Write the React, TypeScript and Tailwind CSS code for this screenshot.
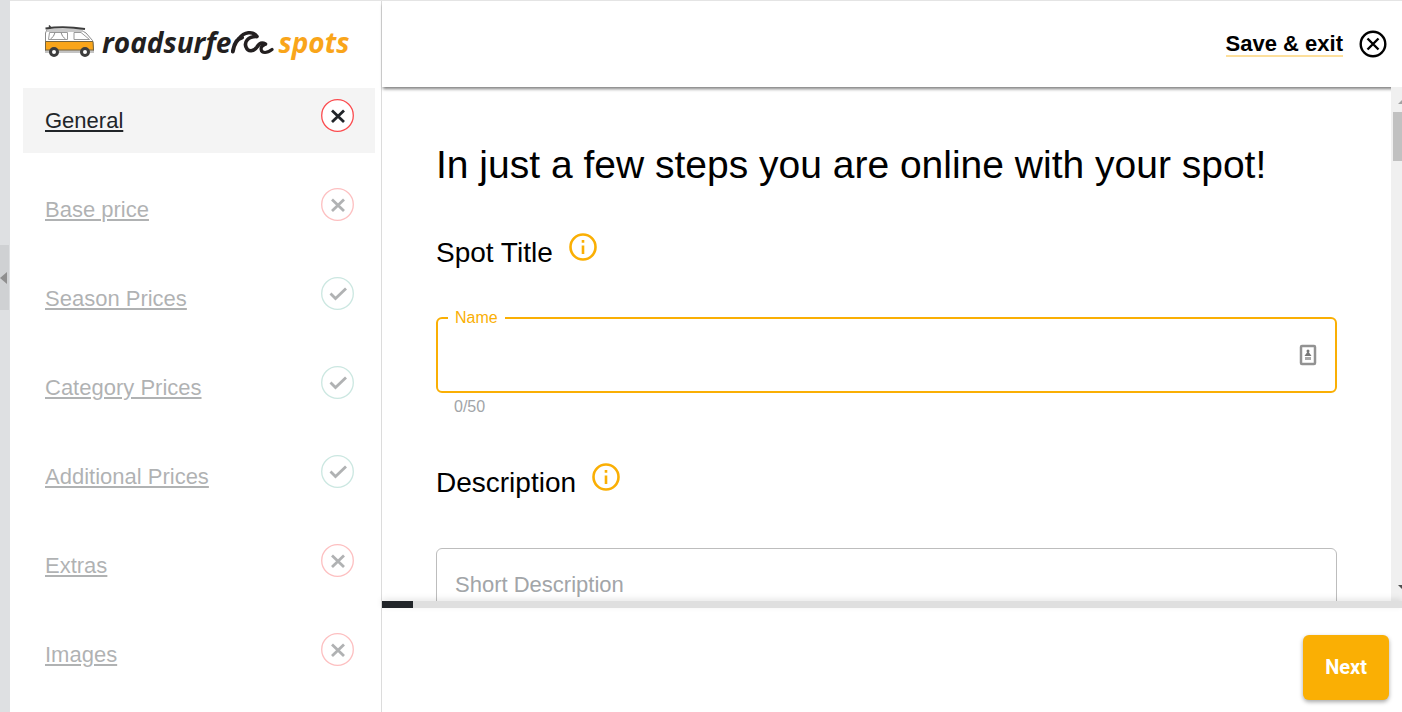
import { useState } from 'react';

type Step = {
  name: string;
  done: boolean;
};

const steps: Step[] = [
  { name: 'General', done: false },
  { name: 'Base price', done: false },
  { name: 'Season Prices', done: true },
  { name: 'Category Prices', done: true },
  { name: 'Additional Prices', done: true },
  { name: 'Extras', done: false },
  { name: 'Images', done: false },
];

const VanIcon = () => (
  <svg width="52" height="34" viewBox="0 0 52 34" fill="none" aria-hidden="true">
    <path d="M3 5.500 H36 L42 9 L48.500 16.500 L49.500 27 H1.500 V9 Z" fill="#fff" stroke="#8a8a8a" />
    <path d="M3 5 H37 L40 8 H2.500 Z" fill="#c9c9c9" />
    <path d="M1.500 17.500 H49 L49.500 26 H1.500 Z" fill="#f9a51a" stroke="#77653f" />
    <path d="M5.500 8.500 H23.500 V15.500 H4.500 Z M30 8.500 H37 L45.500 15.500 H30 Z" fill="#fff" stroke="#9a9a9a" />
    <path d="M11 8.500 Q10 13 6.500 15 M17 8.500 Q18 13 21.500 15" stroke="#8a8a8a" />
    <path d="M1 28 H50" stroke="#c4c4c4" strokeWidth="2" />
    <path d="M1.500 4.500 Q20 2 41 5" stroke="#3d3d3d" strokeWidth="2" />
    <path d="M5 1.500 L7 4" stroke="#3d3d3d" strokeWidth="1.500" />
    <circle cx="10" cy="28" r="3.500" fill="#fff" stroke="#3d3d3d" strokeWidth="3" />
    <circle cx="41" cy="28" r="3.500" fill="#fff" stroke="#3d3d3d" strokeWidth="3" />
  </svg>
);

const WaveIcon = () => (
  <svg width="43" height="28" viewBox="0 0 43 28" fill="none" stroke="#231f20" strokeLinecap="round" strokeLinejoin="round" aria-hidden="true">
    <path d="M1.800 22.500 C3 15 5 10 11 8.500" strokeWidth="4" />
    <path d="M8 9.500 C13 3 22 1.500 26 7.500" strokeWidth="3.600" />
    <path d="M25 7.500 C17 7.500 13 13 15 18 C17 23.500 23 22.500 26 18 C28 14.500 31 13 34.500 15" strokeWidth="3.600" />
    <path d="M33 16 C28.500 18 29.500 23.500 34 23.500 C37 23.500 39 22 41 20.500" strokeWidth="3.200" />
  </svg>
);

const Logo = () => (
  <a href="#" aria-label="roadsurfer spots" className="flex h-[87px] items-start pl-[34px] pt-[23px]">
    <VanIcon />
    <span className="ml-[6px] font-['Open_Sans',sans-serif] text-[28px] font-bold italic leading-9 text-[#231f20]">
      roadsurfe
    </span>
    <span className="pt-[5px]">
      <WaveIcon />
    </span>
    <span className="ml-1 font-['Open_Sans',sans-serif] text-[28px] font-bold italic leading-9 text-[#f9a51a]">
      spots
    </span>
  </a>
);

const StatusIcon = ({ done }: { done: boolean }) => (
  <svg width="33" height="33" viewBox="0 0 33 33" fill="none" aria-hidden="true">
    <circle cx="16.500" cy="16.500" r="15.800" fill="#fff" stroke={done ? '#6cbcaa' : '#fb4b4e'} strokeWidth="1.300" />
    {done ? (
      <path d="M9.500 16.500 L14.500 21.500 L25 11.500" stroke="#212529" strokeWidth="2.800" />
    ) : (
      <path d="M11 11.500 L23 23 M23 11.500 L11 23" stroke="#212529" strokeWidth="2.800" />
    )}
  </svg>
);

const InfoButton = ({ label }: { label: string }) => (
  <button type="button" aria-label={label}>
    <svg width="28" height="28" viewBox="0 0 28 28" fill="none" aria-hidden="true">
      <circle cx="14" cy="14" r="12.500" stroke="#faaf04" strokeWidth="2.600" />
      <path d="M14 7 V9.800 M14 12.500 V21" stroke="#faaf04" strokeWidth="2.600" />
    </svg>
  </button>
);

const ContactIcon = () => (
  <svg width="18" height="22" viewBox="0 0 18 22" fill="none" aria-hidden="true">
    <rect x="2" y="2" width="14" height="18" rx="1" fill="#fff" stroke="#929292" strokeWidth="2.500" />
    <circle cx="9" cy="7" r="1.500" fill="#777" />
    <path d="M5.500 12 L9 7 L12.500 12 Z" fill="#777" />
    <path d="M6 14.500 H12" stroke="#aaa" strokeWidth="3" />
  </svg>
);

const Sidebar = () => (
  <aside className="flex w-[372px] shrink-0 flex-col border-r border-[#dcdcdc]">
    <Logo />
    <nav className="flex flex-col gap-6 pl-[13px] pr-[6px]">
      {steps.map((step, index) => (
        <a
          key={step.name}
          href="#"
          className={
            index === 0
              ? 'flex h-[65px] items-start justify-between bg-[#f4f4f4] pl-[22px] pr-[21px] pt-[11px] text-[22px]'
              : 'flex h-[65px] items-start justify-between pl-[22px] pr-[21px] pt-[11px] text-[22px] opacity-35'
          }
        >
          <span className="pt-[6px] leading-8 text-[#212529] underline decoration-2 underline-offset-2">{step.name}</span>
          <StatusIcon done={step.done} />
        </a>
      ))}
    </nav>
  </aside>
);

const ScrollBar = () => (
  <div className="relative z-20 flex w-[11px] shrink-0 flex-col justify-between overflow-hidden bg-[#f0f0f0]" aria-hidden="true">
    <div className="flex flex-col items-start pl-[2px]">
      <svg className="mb-[8px] ml-[5px] mt-[12px]" width="9" height="5" viewBox="0 0 9 5">
        <path d="M0 5 L5 0 L10 5 Z" fill="#a3a3a3" />
      </svg>
      <div className="h-[49px] w-[15px] bg-[#c1c1c1]" />
    </div>
    <svg className="mb-[11px] ml-[7px]" width="9" height="5" viewBox="0 0 9 5">
      <path d="M0 0 H10 L5 5 Z" fill="#505050" />
    </svg>
  </div>
);

export default function App() {
  const [name, setName] = useState('');

  return (
    <div className="flex h-screen overflow-hidden bg-white font-['Liberation_Sans',Arial,sans-serif] text-black">
      <div className="flex w-[10px] shrink-0 flex-col bg-[#dee0e2] pt-[245px]">
        <button type="button" aria-label="Collapse panel" className="flex h-[65px] w-[9px] items-center bg-[#cfd1d3]">
          <svg width="7" height="12" viewBox="0 0 7 12" aria-hidden="true">
            <path d="M7 0 V12 L0 6 Z" fill="#8f8f8f" />
          </svg>
        </button>
      </div>

      <div className="flex min-w-0 flex-1 border-t border-[#e4e4e4]">
        <Sidebar />

        <div className="flex min-w-0 flex-1 flex-col">
          <header className="relative z-10 flex h-[86px] shrink-0 items-center justify-end gap-4 bg-white pr-[15px] shadow-[0_3px_3px_-1px_rgba(0,0,0,0.5)]">
            <button type="button" className="border-b-2 border-[#fddf9b] pt-px text-[22px] font-bold leading-[22px]">
              Save &amp; exit
            </button>
            <button type="button" aria-label="Close">
              <svg width="28" height="28" viewBox="0 0 28 28" fill="none" stroke="#000" strokeWidth="2.400" aria-hidden="true">
                <circle cx="14" cy="14" r="12.300" />
                <path d="M8.500 8.500 L19.500 19.500 M19.500 8.500 L8.500 19.500" />
              </svg>
            </button>
          </header>

          <div className="flex min-h-0 flex-1">
            <main className="min-w-0 flex-1 overflow-hidden px-[54px] pt-[54px]">
              <h1 className="text-[39px] leading-[48px]">In just a few steps you are online with your spot!</h1>

              <div className="mt-11 flex items-start gap-4">
                <h2 className="pt-1 text-[28px] leading-8">Spot Title</h2>
                <InfoButton label="About the spot title" />
              </div>
              <fieldset className="mt-[41px] h-[83px] rounded-md border-2 border-[#faaf04] pl-[10px]">
                <legend className="px-[7px] text-base leading-4 text-[#faaf04]">
                  <label htmlFor="name">Name</label>
                </legend>
                <div className="flex h-[58px] items-center pr-[18px]">
                  <input
                    id="name"
                    type="text"
                    maxLength={50}
                    value={name}
                    onChange={(e) => setName(e.target.value)}
                    className="h-full min-w-0 flex-1 px-2 text-[22px] outline-none"
                  />
                  <ContactIcon />
                </div>
              </fieldset>
              <p className="mt-1 pl-[18px] text-base leading-5 text-[#a2a5a8]">{name.length}/50</p>

              <div className="mt-[46px] flex items-start gap-4">
                <h2 className="pt-1 text-[28px] leading-8">Description</h2>
                <InfoButton label="About the description" />
              </div>
              <textarea
                aria-label="Short Description"
                placeholder="Short Description"
                className="mt-[49px] block h-[160px] w-full resize-none rounded-md border border-[#bdbdbd] px-[18px] pt-[20px] text-[22px] leading-8 outline-none placeholder:text-[#a2a5a8]"
              />
            </main>
            <ScrollBar />
          </div>

          <footer className="relative z-30 shrink-0 bg-white">
            <div className="h-[7px] bg-[#dfdfdf] shadow-[0_-2px_6px_rgba(0,0,0,0.1)]">
              <div className="h-full w-[3%] bg-[#212529]" />
            </div>
            <div className="flex h-[104px] items-start justify-end pr-[13px] pt-[27px]">
              <button
                type="button"
                className="h-[65px] rounded-md bg-[#faaf04] px-[22px] pb-[2px] font-['Roboto',sans-serif] text-xl font-bold text-white shadow-[0_2px_4px_rgba(0,0,0,0.35)]"
              >
                Next
              </button>
            </div>
          </footer>
        </div>
      </div>
    </div>
  );
}
